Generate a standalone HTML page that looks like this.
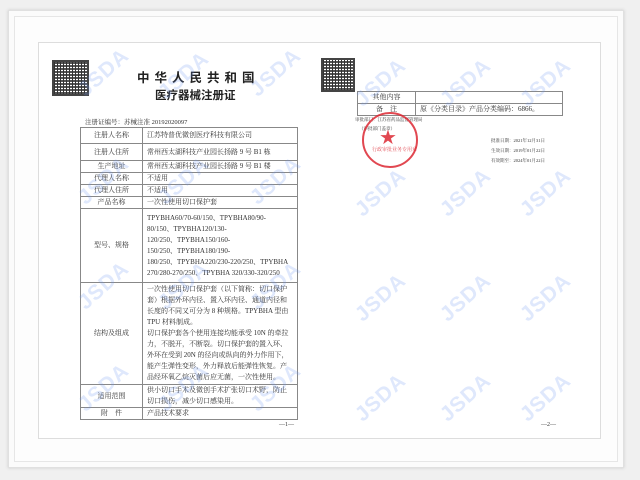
<!DOCTYPE html>
<html><head><meta charset="utf-8"><style>
*{margin:0;padding:0;box-sizing:border-box}
body{width:640px;height:480px;overflow:hidden;background:#f0f0f0;position:relative;font-family:"Liberation Serif","Noto Serif CJK SC","Noto Sans CJK SC",serif;color:#333}
.frame{position:absolute;left:8px;top:10px;width:616px;height:458px;background:#fbfbfb;border:1px solid #e0e0e0;box-shadow:0 0 3px #ccc}
.mold{position:absolute;left:14px;top:16px;width:604px;height:446px;border:1px solid #e6e6e6;background:#fdfdfd}
.paper{position:absolute;left:38px;top:42px;width:563px;height:397px;background:#fff;border:1px solid #ddd;overflow:hidden}
.a{position:absolute;white-space:nowrap}
.qr{position:absolute;background:
repeating-linear-gradient(90deg,#333 0 1px,transparent 1px 3px),
repeating-linear-gradient(0deg,#555 0 2px,#fff 2px 3px);background-color:#888;border:2px solid #444}
table{border-collapse:collapse;position:absolute}
td{border:1px solid #888;font-size:7px;line-height:11px;padding:0 4px;vertical-align:middle;color:#333}
td.l{text-align:center;width:62px}
.wm{position:absolute;width:0;height:0}
.wm span{position:absolute;left:-32px;top:-12px;width:64px;text-align:center;font-family:"Liberation Sans",sans-serif;font-weight:bold;font-size:21px;line-height:24px;color:rgba(110,150,240,0.22);transform:rotate(-42deg);letter-spacing:1px}
</style></head><body>
<div class="frame"></div><div class="mold"></div>
<div class="paper">
<div class="qr" style="left:13px;top:17px;width:37px;height:36px"></div>
<div class="qr" style="left:282px;top:15px;width:34px;height:34px"></div>
<div class="a" style="left:98px;top:24px;font-family:'Liberation Sans','Noto Sans CJK SC',sans-serif;font-size:12.5px;font-weight:bold;letter-spacing:5px;color:#222">中华人民共和国</div>
<div class="a" style="left:116px;top:44px;font-family:'Liberation Sans','Noto Sans CJK SC',sans-serif;font-size:11.5px;font-weight:bold;color:#222">医疗器械注册证</div>
<div class="a" style="left:46px;top:74px;font-size:6.5px">注册证编号：苏械注准 20192020097</div>
<table style="left:41px;top:84px;width:218px">
<tr style="height:16px"><td class="l">注册人名称</td><td>江苏特普优微创医疗科技有限公司</td></tr>
<tr style="height:17px"><td class="l">注册人住所</td><td>常州西太湖科技产业园长扬路 9 号 B1 栋</td></tr>
<tr style="height:12px"><td class="l">生产地址</td><td>常州西太湖科技产业园长扬路 9 号 B1 楼</td></tr>
<tr style="height:12px"><td class="l">代理人名称</td><td>不适用</td></tr>
<tr style="height:12px"><td class="l">代理人住所</td><td>不适用</td></tr>
<tr style="height:12px"><td class="l">产品名称</td><td>一次性使用切口保护套</td></tr>
<tr style="height:74px"><td class="l">型号、规格</td><td>TPYBHA60/70-60/150、TPYBHA80/90-<br>80/150、TPYBHA120/130-<br>120/250、TPYBHA150/160-<br>150/250、TPYBHA180/190-<br>180/250、TPYBHA220/230-220/250、TPYBHA<br>270/280-270/250、TPYBHA 320/330-320/250</td></tr>
<tr style="height:102px"><td class="l">结构及组成</td><td style="line-height:11px">一次性使用切口保护套（以下简称：切口保护<br>套）根据外环内径、置入环内径、通道内径和<br>长度的不同又可分为 8 种规格。TPYBHA 型由<br>TPU 材料制成。<br>切口保护套各个使用连接均能承受 10N 的牵拉<br>力，不脱开，不断裂。切口保护套的置入环、<br>外环在受到 20N 的径向或纵向的外力作用下，<br>能产生弹性变形，外力释放后能弹性恢复。产<br>品经环氧乙烷灭菌后应无菌，一次性使用。</td></tr>
<tr style="height:23px"><td class="l">适用范围</td><td>供小切口手术及微创手术扩张切口术野，防止<br>切口损伤，减少切口感染用。</td></tr>
<tr style="height:11px"><td class="l">附　件</td><td>产品技术要求</td></tr>
</table>
<div class="a" style="left:240px;top:379px;font-size:6px">—1—</div>
<table style="left:318px;top:48px;width:206px">
<tr style="height:11px"><td style="width:58px;text-align:center">其他内容</td><td></td></tr>
<tr style="height:12px"><td style="text-align:center">备　注</td><td>原《分类目录》产品分类编码：6866。</td></tr>
</table>
<div class="a" style="left:316px;top:74px;font-size:4.5px">审批部门：江苏省药品监督管理局</div>
<div class="a" style="left:320px;top:83px;font-size:4.5px">（审批部门盖章）</div>
<div style="position:absolute;left:323px;top:69px;width:56px;height:56px;border:2px solid rgba(220,40,50,0.85);border-radius:50%"></div>
<div class="a" style="left:340px;top:82px;font-size:20px;color:rgba(220,40,50,0.85);font-family:'DejaVu Sans',sans-serif">★</div>
<div class="a" style="left:333px;top:103px;font-size:5px;color:rgba(220,40,50,0.85)">行政审批业务专用章</div>
<div class="a" style="left:452px;top:93px;font-size:4.5px;line-height:10px;white-space:pre">批准日期：2021年12月31日
生效日期：2019年01月22日
有效期至：2024年01月22日</div>
<div class="a" style="left:502px;top:379px;font-size:6px">—2—</div>

<div class="wm" style="left:65px;top:30px"><span>JSDA</span></div>
<div class="wm" style="left:145px;top:33px"><span>JSDA</span></div>
<div class="wm" style="left:237px;top:30px"><span>JSDA</span></div>
<div class="wm" style="left:342px;top:40px"><span>JSDA</span></div>
<div class="wm" style="left:427px;top:40px"><span>JSDA</span></div>
<div class="wm" style="left:507px;top:40px"><span>JSDA</span></div>

<div class="wm" style="left:65px;top:138px"><span>JSDA</span></div>
<div class="wm" style="left:145px;top:138px"><span>JSDA</span></div>
<div class="wm" style="left:237px;top:138px"><span>JSDA</span></div>
<div class="wm" style="left:342px;top:150px"><span>JSDA</span></div>
<div class="wm" style="left:427px;top:150px"><span>JSDA</span></div>
<div class="wm" style="left:507px;top:150px"><span>JSDA</span></div>

<div class="wm" style="left:65px;top:243px"><span>JSDA</span></div>
<div class="wm" style="left:145px;top:243px"><span>JSDA</span></div>
<div class="wm" style="left:237px;top:243px"><span>JSDA</span></div>
<div class="wm" style="left:342px;top:255px"><span>JSDA</span></div>
<div class="wm" style="left:427px;top:255px"><span>JSDA</span></div>
<div class="wm" style="left:507px;top:255px"><span>JSDA</span></div>

<div class="wm" style="left:65px;top:345px"><span>JSDA</span></div>
<div class="wm" style="left:145px;top:345px"><span>JSDA</span></div>
<div class="wm" style="left:237px;top:345px"><span>JSDA</span></div>
<div class="wm" style="left:342px;top:355px"><span>JSDA</span></div>
<div class="wm" style="left:427px;top:355px"><span>JSDA</span></div>
<div class="wm" style="left:507px;top:355px"><span>JSDA</span></div>
</div>
</body></html>
